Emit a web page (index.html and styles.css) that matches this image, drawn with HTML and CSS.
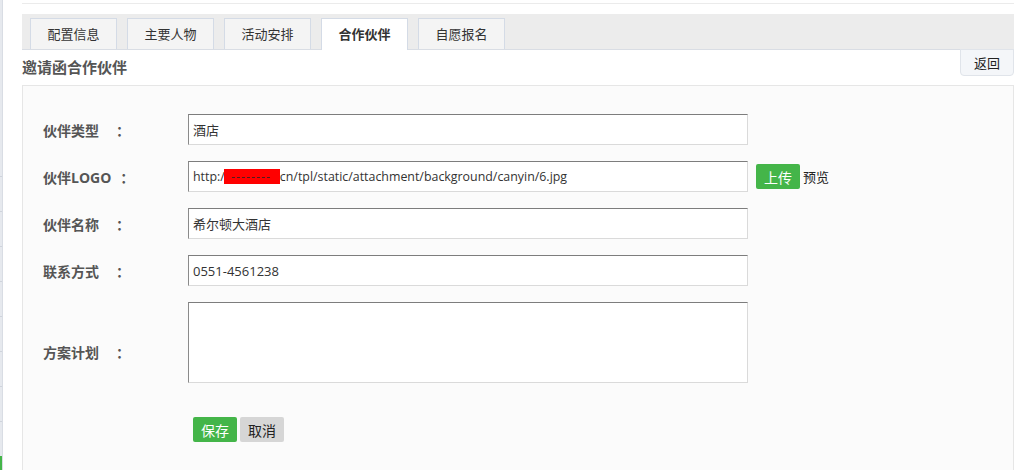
FILE: index.html
```html
<!DOCTYPE html>
<html lang="zh-CN">

<head>
    <meta charset="UTF-8">
    <meta name="viewport" content="width=device-width, initial-scale=1.0">
    <title>合作伙伴</title>
    <link rel="stylesheet" href="styles.css">
</head>

<body>
    <div class="page">
        <aside class="side">
            <div class="side-top"></div>
            <div class="side-item"></div>
            <div class="side-item"></div>
            <div class="side-item"></div>
            <div class="side-item"></div>
            <div class="side-item"></div>
            <div class="side-item"></div>
            <div class="side-item"></div>
            <div class="side-item"></div>
            <div class="side-item on"></div>
        </aside>

        <main class="main">
            <div class="topline"></div>

            <ul class="tabs">
                <li class="tab">配置信息</li>
                <li class="tab">主要人物</li>
                <li class="tab">活动安排</li>
                <li class="tab active">合作伙伴</li>
                <li class="tab">自愿报名</li>
            </ul>

            <div class="title-row">
                <h2 class="title">邀请函合作伙伴</h2>
                <button class="btn-back" type="button">返回</button>
            </div>

            <form class="panel">
                <div class="row">
                    <label class="lbl"><span class="lbl-name">伙伴类型</span><span class="colon">：</span></label>
                    <input class="field" type="text" value="酒店">
                </div>
                <div class="row">
                    <label class="lbl"><span class="lbl-name">伙伴LOGO</span><span class="colon">：</span></label>
                    <div class="field url">http:/<span class="redact"><span class="redact-line"></span></span>cn/tpl/static/attachment/background/canyin/6.jpg</div>
                    <button class="btn-green btn-upload" type="button">上传</button>
                    <span class="preview">预览</span>
                </div>
                <div class="row">
                    <label class="lbl"><span class="lbl-name">伙伴名称</span><span class="colon">：</span></label>
                    <input class="field" type="text" value="希尔顿大酒店">
                </div>
                <div class="row">
                    <label class="lbl"><span class="lbl-name">联系方式</span><span class="colon">：</span></label>
                    <input class="field" type="text" value="0551-4561238">
                </div>
                <div class="row">
                    <label class="lbl lbl-low"><span class="lbl-name">方案计划</span><span class="colon">：</span></label>
                    <textarea class="field area"></textarea>
                </div>
                <div class="actions">
                    <button class="btn-green" type="submit">保存</button>
                    <button class="btn-gray" type="button">取消</button>
                </div>
            </form>
        </main>
    </div>
</body>

</html>
```

FILE: styles.css
```css
body {
    margin: 0;
    background: #fff;
    font-family: "Open Sans", "Noto Sans CJK SC", sans-serif;
    color: #333;
    overflow: hidden;
}

.page {
    display: flex;
    height: 470px;
}

/* cut-off sidebar on the left */
.side {
    width: 2px;
    border-right: 1px solid #d9dde4;
    background: #e6e9ee;
    display: flex;
    flex-direction: column;
}

.side-top {
    height: 176px;
}

.side-item {
    height: 34px;
    border-top: 1px solid #cfd4dc;
}

.side-item.on {
    flex: 1;
    background: #44b549;
    border-top: none;
}

.main {
    flex: 1;
    padding: 0 5px 0 19px;
    min-width: 0;
    display: flex;
    flex-direction: column;
}

.topline {
    height: 3px;
    border-bottom: 1px solid #ebebeb;
}

.tabs {
    list-style: none;
    margin: 10px 0 0 0;
    padding: 0 0 0 8px;
    height: 35px;
    flex: none;
    display: flex;
    align-items: flex-end;
    gap: 10px;
    background: #ececec;
    border-bottom: 1px solid #d9dde4;
}

.tab {
    width: 85px;
    height: 30px;
    line-height: 30px;
    text-align: center;
    font-size: 13px;
    color: #333;
    background: #f4f4f4;
    border: 1px solid #d4dbe6;
    border-bottom: none;
}

.tab.active {
    background: #fff;
    font-weight: bold;
    height: 31px;
    margin-bottom: -1px;
}

.title-row {
    display: flex;
    justify-content: space-between;
    height: 35px;
    flex: none;
}

.title {
    margin: 0;
    font-size: 15px;
    font-weight: bold;
    color: #555;
    line-height: 35px;
}

.btn-back {
    height: 27px;
    width: 54px;
    margin: -1px 0 0 0;
    border: 1px solid #e0e4ea;
    border-radius: 0 0 4px 4px;
    background: #f4f6f9;
    font-family: inherit;
    font-size: 13px;
    color: #222;
    padding: 0;
}

.panel {
    flex: 1;
    border: 1px solid #e6e6e6;
    border-bottom: none;
    background: #fbfbfb;
    padding: 28px 0 0 20px;
}

.row {
    display: flex;
    align-items: center;
    margin-bottom: 16px;
}

.lbl {
    width: 145px;
    flex: none;
    display: flex;
    font-size: 14px;
    font-weight: bold;
    color: #555;
}

.lbl-low {
    padding-top: 18px;
}

.lbl-name {
    min-width: 64px;
}

.colon {
    padding-left: 9px;
}

.field {
    box-sizing: border-box;
    width: 560px;
    height: 31px;
    margin: 0;
    padding: 0 4px;
    border: 1px solid #dadada;
    border-top-color: #7d7d7d;
    border-left-color: #8a8a8a;
    background: #fff;
    font-family: inherit;
    font-size: 13px;
    color: #333;
    line-height: 29px;
}

.url {
    white-space: nowrap;
    overflow: hidden;
    font-size: 12.4px;
}

.redact {
    display: inline-block;
    vertical-align: middle;
    width: 56px;
    height: 15px;
    margin: -2px 0 0 -1px;
    background: #ff0000;
    position: relative;
}

.redact-line {
    position: absolute;
    left: 8px;
    right: 10px;
    top: 8px;
    border-top: 1px dashed #4a2020;
}

.area {
    height: 81px;
    resize: none;
}

.btn-green,
.btn-gray {
    height: 25px;
    width: 44px;
    padding: 0;
    border: none;
    border-radius: 2px;
    font-family: inherit;
    font-size: 14px;
}

.btn-green {
    background: #44b549;
    color: #fff;
}

.btn-gray {
    background: #d6d6d6;
    color: #222;
}

.btn-upload {
    margin-left: 8px;
}

.preview {
    margin-left: 3px;
    font-size: 13px;
    color: #222;
}

.actions {
    display: flex;
    gap: 3px;
    padding: 18px 0 0 150px;
}
```
